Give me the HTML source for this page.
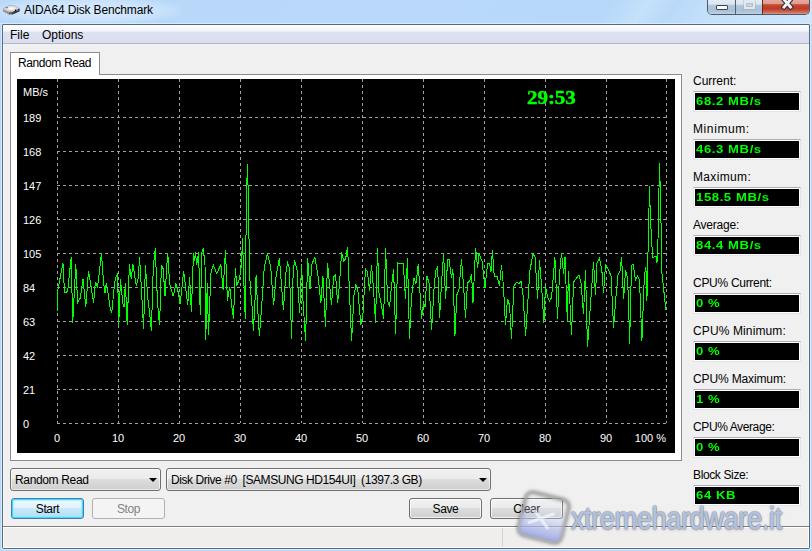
<!DOCTYPE html>
<html><head><meta charset="utf-8">
<style>
*{margin:0;padding:0;box-sizing:border-box}
html,body{width:812px;height:551px;overflow:hidden}
body{position:relative;background:#b6d8fb;font-family:"Liberation Sans",sans-serif;font-size:12px;color:#000}
.a{position:absolute}
#title{left:0;top:0;width:812px;height:24px;background:linear-gradient(125deg,#b8d8f9 0%,#bad9fa 50%,#b7d8fa 74%,#c5e1fb 78.5%,#bad9f9 82%,#c4e0fb 87%,#cde6fc 100%);border-bottom:1px solid #d6eafd}
#client{left:2px;top:24px;width:808px;height:525px;background:#f0f0f0;border:1px solid #5c6b7b;border-radius:1px 1px 2px 2px;box-shadow:inset 1px 0 #f9f8f6,inset -1px 0 #f9f8f6}
#menu{left:3px;top:25px;width:806px;height:19px;background:linear-gradient(#fcfdfe 0%,#f3f5fb 35%,#dde1f0 38%,#d9ddef 100%);border-bottom:1px solid #b3b8c9}
.mi{top:28px;font-size:12px;line-height:15px}
#tab{left:10px;top:52px;width:90px;height:23px;background:#fff;border:1px solid #898c95;border-bottom:none;z-index:2}
#panel{left:10px;top:74px;width:672px;height:387px;background:#fff;border:1px solid #898c95}
#chart{left:17px;top:79px;width:658px;height:374px;background:#000;z-index:3}
.yl{position:absolute;left:6px;color:#fff;font-size:11px;line-height:14px}
.xl{position:absolute;top:352px;width:30px;text-align:center;color:#fff;font-size:11px;line-height:14px}
#timer{left:510px;top:8px;color:#00ff00;font:bold 19px "Liberation Serif",serif;letter-spacing:0px;-webkit-text-stroke:0.5px #00ff00;transform:scaleX(1.1);transform-origin:0 0;white-space:nowrap}
.lbl{left:693px;color:#000;font-size:12px;line-height:15px}
.box{left:693px;width:108px;height:21px;background:#000;border:1px solid #e3e4e8;border-top-color:#abadb3;box-shadow:inset 0 0 0 1px #fff}
.bv{position:absolute;left:2px;top:3px;color:#00ff00;font-weight:bold;font-size:11px;line-height:13px;letter-spacing:0.5px;transform:scaleX(1.19);transform-origin:0 0;white-space:nowrap}
.combo{top:468px;height:23px;border:1px solid #707070;border-radius:3px;background:linear-gradient(#f2f2f2 0%,#ebebeb 45%,#dddddd 50%,#cfcfcf 100%);box-shadow:inset 0 0 0 1px rgba(255,255,255,.6)}
.ct{position:absolute;left:4px;top:4px;line-height:15px;letter-spacing:-0.35px}
.arr{position:absolute;top:9px;width:0;height:0;border-left:4px solid transparent;border-right:4px solid transparent;border-top:4px solid #000}
.btn{top:498px;height:21px;border:1px solid #707070;border-radius:3px;background:linear-gradient(#f2f2f2 0%,#ebebeb 45%,#dddddd 50%,#cfcfcf 100%);box-shadow:inset 0 0 0 1px rgba(255,255,255,.7);text-align:center;line-height:21px;letter-spacing:-0.4px}
#status{left:3px;top:526px;width:806px;height:22px;background:#f0eded;border-top:1px solid #7f7f7f;box-shadow:inset 1px 1px 0 #fff,inset -1px -1px 0 #fff}
</style></head><body>
<div id="title" class="a"></div>
<div class="a" style="left:-10px;top:-2px;width:190px;height:26px;background:radial-gradient(ellipse at center,rgba(232,244,254,0.7) 0%,rgba(222,238,253,0.45) 55%,rgba(200,225,250,0) 78%)"></div>
<svg class="a" style="left:0;top:0" width="22" height="18" viewBox="0 0 22 18">
<defs><radialGradient id="hl" cx="0.5" cy="0.4" r="0.6"><stop offset="0" stop-color="#ffffff"/><stop offset="0.6" stop-color="#d6d6d6"/><stop offset="1" stop-color="#a8a8a8"/></radialGradient></defs>
<path d="M3 8.5 L8 5.8 L14.5 5.8 L19.5 8.6 L19.5 11.2 L12.5 14.6 L9 14.6 L3 11.2 Z" fill="#5c5c5e"/>
<path d="M3 8.5 L8 5.8 L14.5 5.8 L19.5 8.6 L12.5 12.2 L9 12.2 L3 9.8 Z" fill="url(#hl)"/>
<path d="M3 9.8 L9 12.2 L9 14.6 L3 11.2 Z" fill="#9c9c9e"/>
<path d="M12.5 12.2 L19.5 8.6 L19.5 11.2 L12.5 14.6 Z" fill="#3a3a3c"/>
<ellipse cx="6.8" cy="7.6" rx="1.3" ry="0.7" fill="#707070"/>
<rect x="15" y="9.6" width="1.2" height="1.6" fill="#000"/><rect x="16.4" y="9.4" width="1.6" height="1.4" fill="#8c8cd8"/>
</svg>

<div class="a" style="left:24px;top:3px;font-size:12px;line-height:15px;letter-spacing:-0.15px">AIDA64 Disk Benchmark</div>
<!-- caption buttons -->
<div class="a" style="left:707px;top:-2px;width:103px;height:17px;border:1px solid #4d5a69;border-top:none;border-radius:0 0 5px 5px;overflow:hidden;background:#cfdcea">
 <div class="a" style="left:0;top:0;width:28px;height:16px;background:linear-gradient(#e6eef6 0%,#dce6f0 40%,#b5c8dc 42%,#aac0d6 80%,#c0d2e4 100%);border-right:1px solid #56626f"></div>
 <div class="a" style="left:8px;top:7px;width:12px;height:5px;background:#fff;border:1px solid #3c4652;border-radius:1px"></div>
 <div class="a" style="left:28px;top:0;width:26px;height:16px;background:linear-gradient(#e6eef6 0%,#dce6f0 40%,#b5c8dc 42%,#aac0d6 80%,#c0d2e4 100%)"></div>
 <div class="a" style="left:36px;top:0px;width:11px;height:11px;border:2px solid #e2e8ee;box-shadow:0 0 0 1px rgba(150,165,180,.35)"></div><div class="a" style="left:38px;top:5px;width:7px;height:4px;border:1px solid #b4bfca;background:#c9d6e2"></div>
 <div class="a" style="left:54px;top:0;width:48px;height:16px;background:linear-gradient(#e8b2a8 0%,#dd9c8e 36%,#c8472f 42%,#bb3d27 68%,#cf6e5a 90%,#dc9a88 100%);border-left:1px solid #6a2a20"></div>
 <svg class="a" style="left:72px;top:0px" width="15" height="13" viewBox="0 0 15 13"><path d="M4 1.5 L10.5 9 M10.5 1.5 L4 9" stroke="#2f3540" stroke-width="5" stroke-linecap="square"/><path d="M4 1.5 L10.5 9 M10.5 1.5 L4 9" stroke="#f6f6f6" stroke-width="2.8" stroke-linecap="square"/></svg>
</div>
<div class="a" style="left:1px;top:23px;width:810px;height:527px;border:1px solid #d6ebfd;border-radius:2px"></div>
<div id="client" class="a"></div>
<div id="menu" class="a"></div>
<div class="a mi" style="left:10px">File</div>
<div class="a mi" style="left:42px">Options</div>
<div id="panel" class="a"></div>
<div id="tab" class="a"><div class="a" style="left:7px;top:3px;line-height:15px;letter-spacing:-0.4px">Random Read</div></div>
<div id="chart" class="a">
<svg class="a" style="left:0;top:0" width="658" height="374"><path d="M40.5 0V344M101.5 0V344M162.5 0V344M223.5 0V344M284.5 0V344M345.5 0V344M406.5 0V344M467.5 0V344M528.5 0V344M589.5 0V344M649.5 0V344M40 38.5H650M40 72.5H650M40 106.5H650M40 140.5H650M40 174.5H650M40 208.5H650M40 242.5H650M40 276.5H650M40 310.5H650M40 344.5H650" stroke="#a0a0a0" stroke-width="1" stroke-dasharray="3 3" fill="none" shape-rendering="crispEdges"/>
<path d="M40.3 231.8 L41.0 210.0 L44.3 192.8 L46.0 184.6 L47.5 213.6 L50.6 212.7 L54.2 178.2 L55.7 243.6 L58.8 185.5 L60.6 223.6 L63.3 219.0 L66.0 200.0 L68.8 228.0 L71.5 191.9 L76.6 223.6 L78.4 202.7 L80.6 208.0 L84.5 173.7 L85.2 184.6 L86.6 203.6 L88.0 213.6 L89.4 203.6 L91.2 215.4 L93.5 230.9 L94.8 233.6 L97.5 204.6 L99.0 198.2 L100.6 194.6 L101.7 246.3 L103.5 200.0 L105.7 223.6 L107.0 228.2 L108.4 203.6 L110.2 246.3 L112.4 185.5 L114.2 200.0 L116.0 185.5 L117.8 197.3 L119.3 206.4 L121.1 200.0 L122.6 178.2 L126.6 249.9 L128.4 186.4 L130.8 219.0 L132.6 233.6 L134.4 251.7 L136.3 187.3 L138.4 169.2 L139.5 202.7 L141.3 233.6 L142.6 246.3 L144.4 186.4 L146.2 190.0 L148.0 217.3 L149.9 185.5 L150.8 174.6 L152.6 204.6 L156.2 217.3 L159.0 204.6 L161.3 213.6 L163.1 225.4 L166.7 191.9 L170.7 226.3 L172.6 198.2 L174.4 232.7 L176.5 173.7 L177.4 181.7 L178.5 173.4 L179.7 186.4 L181.6 173.4 L183.3 236.0 L184.9 173.4 L186.3 169.4 L188.0 186.4 L188.7 260.7 L190.3 204.0 L191.5 256.0 L193.9 194.6 L196.2 185.9 L199.8 194.6 L203.8 185.2 L206.1 211.2 L208.5 171.0 L210.4 221.8 L212.8 207.6 L214.6 226.5 L216.5 239.5 L218.4 188.8 L219.8 206.5 L222.2 200.6 L224.5 186.4 L225.5 159.5 L227.4 219.0 L228.3 240.0 L229.3 124.0 L230.4 85.0 L231.3 116.0 L232.3 178.0 L233.3 211.8 L234.6 219.0 L236.4 251.7 L237.7 228.2 L239.1 196.4 L240.6 228.2 L242.4 257.2 L244.2 233.6 L247.3 188.2 L250.4 174.6 L253.7 188.2 L256.6 226.3 L259.1 197.3 L262.4 179.1 L266.4 230.9 L269.0 192.9 L270.6 184.0 L272.4 189.0 L274.6 259.8 L276.0 199.0 L277.4 181.0 L280.0 191.0 L282.6 233.8 L284.6 185.0 L286.0 221.9 L288.6 261.8 L290.6 179.0 L293.0 210.0 L294.9 185.0 L297.9 178.0 L300.9 196.0 L303.9 223.9 L305.9 197.0 L308.5 247.8 L310.5 184.0 L314.5 225.9 L316.6 198.0 L318.6 196.0 L320.6 223.9 L322.6 203.9 L324.6 173.0 L326.6 182.0 L328.6 180.0 L330.6 168.0 L332.0 201.9 L333.0 225.9 L334.6 261.8 L337.0 215.9 L338.9 205.9 L340.9 211.9 L343.9 245.8 L345.9 235.8 L348.5 189.9 L350.5 192.9 L352.5 211.9 L354.5 185.9 L356.5 209.9 L358.5 243.8 L360.5 169.0 L362.0 213.9 L364.0 223.9 L366.6 239.8 L368.6 169.0 L370.6 221.9 L372.6 227.9 L374.6 205.9 L376.6 190.0 L378.6 254.8 L380.6 184.0 L383.0 185.0 L386.0 184.0 L387.0 196.0 L388.5 219.9 L390.5 179.0 L392.5 259.8 L394.5 217.9 L396.9 198.9 L398.9 204.9 L401.3 184.9 L402.9 211.9 L404.5 239.8 L406.6 223.9 L408.0 227.9 L410.0 196.9 L412.0 203.9 L414.6 250.8 L417.4 203.9 L419.0 190.9 L420.6 187.9 L422.6 238.8 L424.6 202.9 L426.6 175.0 L428.6 219.9 L430.6 180.0 L432.0 180.0 L434.5 198.9 L435.9 189.9 L437.9 256.8 L439.9 215.9 L441.9 210.9 L444.5 180.0 L446.5 205.9 L448.5 238.8 L450.5 203.9 L452.9 201.9 L454.6 194.9 L456.0 223.9 L458.6 169.0 L460.6 188.9 L462.0 175.0 L465.0 182.0 L468.0 208.9 L470.6 184.0 L472.6 184.0 L474.0 192.9 L475.4 171.0 L477.3 197.9 L479.9 196.9 L482.5 206.9 L484.5 185.9 L486.5 207.9 L488.5 245.8 L490.5 219.9 L492.5 225.9 L494.5 259.8 L496.9 206.9 L500.0 202.9 L502.0 204.9 L504.0 201.9 L506.0 215.9 L508.6 256.8 L510.6 225.9 L513.0 190.9 L516.0 175.0 L518.0 178.0 L520.6 219.9 L522.5 181.0 L524.5 205.9 L526.9 243.8 L528.5 206.9 L530.5 217.9 L532.5 221.9 L534.5 218.9 L537.9 178.0 L540.5 239.8 L542.5 195.9 L544.5 174.0 L546.6 194.9 L548.0 178.0 L550.4 243.3 L551.4 191.9 L554.5 256.0 L556.6 202.9 L562.0 195.9 L564.0 203.9 L566.5 234.6 L568.5 191.0 L570.5 268.4 L574.0 217.9 L576.5 183.0 L578.5 215.9 L579.9 184.0 L582.5 179.0 L584.9 191.9 L586.5 213.9 L588.5 186.0 L592.0 191.9 L594.0 196.9 L596.6 248.8 L598.6 221.9 L601.0 195.9 L603.0 191.9 L604.6 178.0 L606.6 219.9 L608.6 190.9 L610.0 196.9 L611.4 215.9 L612.6 264.8 L614.5 187.0 L616.0 185.0 L618.5 200.9 L620.5 196.9 L622.5 200.9 L624.9 261.8 L627.3 197.9 L628.9 187.9 L629.9 221.9 L632.5 107.0 L633.0 126.0 L634.5 161.8 L636.0 178.8 L639.0 176.8 L640.0 183.8 L641.0 159.8 L642.5 84.0 L643.3 112.0 L644.5 165.8 L644.9 193.9 L648.9 230.9" stroke="#00ff00" stroke-width="1" fill="none" shape-rendering="crispEdges"/></svg>
<div class="yl" style="top:6px">MB/s</div>
<div class="yl" style="top:32px">189</div><div class="yl" style="top:66px">168</div><div class="yl" style="top:100px">147</div><div class="yl" style="top:134px">126</div><div class="yl" style="top:168px">105</div><div class="yl" style="top:202px">84</div><div class="yl" style="top:236px">63</div><div class="yl" style="top:270px">42</div><div class="yl" style="top:304px">21</div><div class="yl" style="top:338px">0</div><div class="xl" style="left:25px">0</div><div class="xl" style="left:86px">10</div><div class="xl" style="left:147px">20</div><div class="xl" style="left:208px">30</div><div class="xl" style="left:269px">40</div><div class="xl" style="left:330px">50</div><div class="xl" style="left:391px">60</div><div class="xl" style="left:452px">70</div><div class="xl" style="left:513px">80</div><div class="xl" style="left:574px">90</div><div class="xl" style="left:589px;width:60px;text-align:right">100 %</div>
<div class="a" id="timer">29:53</div>
</div>
<div class="a lbl" style="top:74px;letter-spacing:0px">Current:</div><div class="a box" style="top:91px"><span class="bv">68.2 MB/s</span></div>
<div class="a lbl" style="top:122px;letter-spacing:0.6px">Minimum:</div><div class="a box" style="top:139px"><span class="bv">46.3 MB/s</span></div>
<div class="a lbl" style="top:170px;letter-spacing:0.34px">Maximum:</div><div class="a box" style="top:187px"><span class="bv">158.5 MB/s</span></div>
<div class="a lbl" style="top:218px;letter-spacing:-0.21px">Average:</div><div class="a box" style="top:235px"><span class="bv">84.4 MB/s</span></div>
<div class="a lbl" style="top:276px;letter-spacing:-0.29px">CPU% Current:</div><div class="a box" style="top:293px"><span class="bv">0 %</span></div>
<div class="a lbl" style="top:324px;letter-spacing:0.12px">CPU% Minimum:</div><div class="a box" style="top:341px"><span class="bv">0 %</span></div>
<div class="a lbl" style="top:372px;letter-spacing:-0.13px">CPU% Maximum:</div><div class="a box" style="top:389px"><span class="bv">1 %</span></div>
<div class="a lbl" style="top:420px;letter-spacing:-0.39px">CPU% Average:</div><div class="a box" style="top:437px"><span class="bv">0 %</span></div>
<div class="a lbl" style="top:468px;letter-spacing:-0.37px">Block Size:</div><div class="a box" style="top:485px"><span class="bv">64 KB</span></div>

<div class="a combo" style="left:10px;width:151px"><div class="ct">Random Read</div><div class="arr" style="left:138px"></div></div>
<div class="a combo" style="left:166px;width:325px"><div class="ct" style="letter-spacing:-0.43px">Disk Drive #0&nbsp; [SAMSUNG HD154UI]&nbsp; (1397.3 GB)</div><div class="arr" style="left:312px"></div></div>
<div class="a btn" style="left:11px;width:73px;border-color:#3c7fb1;background:linear-gradient(#edf8fd 0%,#e2f3fc 45%,#c9e9f9 50%,#b6dff5 92%,#c8e8f8 100%);box-shadow:inset 0 0 0 1px #40dcff,inset 0 0 0 2px rgba(120,230,255,.45)">Start</div>
<div class="a btn" style="left:92px;width:73px;color:#838383;border-color:#adb2b5;background:#f4f4f4;box-shadow:none">Stop</div>
<div class="a btn" style="left:409px;width:73px">Save</div>
<div class="a btn" style="left:490px;width:73px">Clear</div>
<div id="status" class="a"></div>
<div class="a" style="left:502px;top:528px;width:1px;height:19px;background:#d5d2d2"></div>
<!-- watermark -->
<svg class="a" style="left:500px;top:480px;z-index:10" width="90" height="71" viewBox="500 480 90 71">
<defs>
<linearGradient id="wg" x1="0" y1="0" x2="0" y2="1"><stop offset="0" stop-color="#f4f6fa" stop-opacity="0.05"/><stop offset="0.42" stop-color="#d0d8f2" stop-opacity="0.3"/><stop offset="0.6" stop-color="#b8c4ee" stop-opacity="0.6"/><stop offset="1" stop-color="#94a2e0" stop-opacity="0.88"/></linearGradient>
<filter id="wb" x="-30%" y="-30%" width="160%" height="160%"><feGaussianBlur stdDeviation="1.5"/></filter>
</defs>
<g transform="rotate(14 543.6 517.5)">
<rect x="521.6" y="495.5" width="44" height="44" rx="7" fill="none" stroke="#000" stroke-opacity="0.28" stroke-width="5" filter="url(#wb)"/>
<rect x="521.6" y="495.5" width="44" height="44" rx="7" fill="url(#wg)" stroke="#b0b0b4" stroke-opacity="0.7" stroke-width="2.8"/>
</g>
<path d="M535 511 L547.5 528 M529 522.5 L553.5 514" stroke="#ffffff" stroke-opacity="0.6" stroke-width="3" stroke-linecap="round"/>
</svg>
<div class="a" style="left:571px;top:504px;z-index:10;font:27px 'Liberation Sans',sans-serif;line-height:32px;letter-spacing:-0.3px;color:rgba(178,198,230,0.95);-webkit-text-stroke:0.4px rgba(178,198,230,0.95);text-shadow:1px 0 1px rgba(110,110,120,0.45),-1px 0 1px rgba(110,110,120,0.45),0 1px 1px rgba(110,110,120,0.45),0 -1px 1px rgba(110,110,120,0.45),0 1px 3px rgba(0,0,0,0.25);white-space:nowrap;transform:scaleY(1.15);transform-origin:0 27px">xtremehardware.it</div>
</body></html>
